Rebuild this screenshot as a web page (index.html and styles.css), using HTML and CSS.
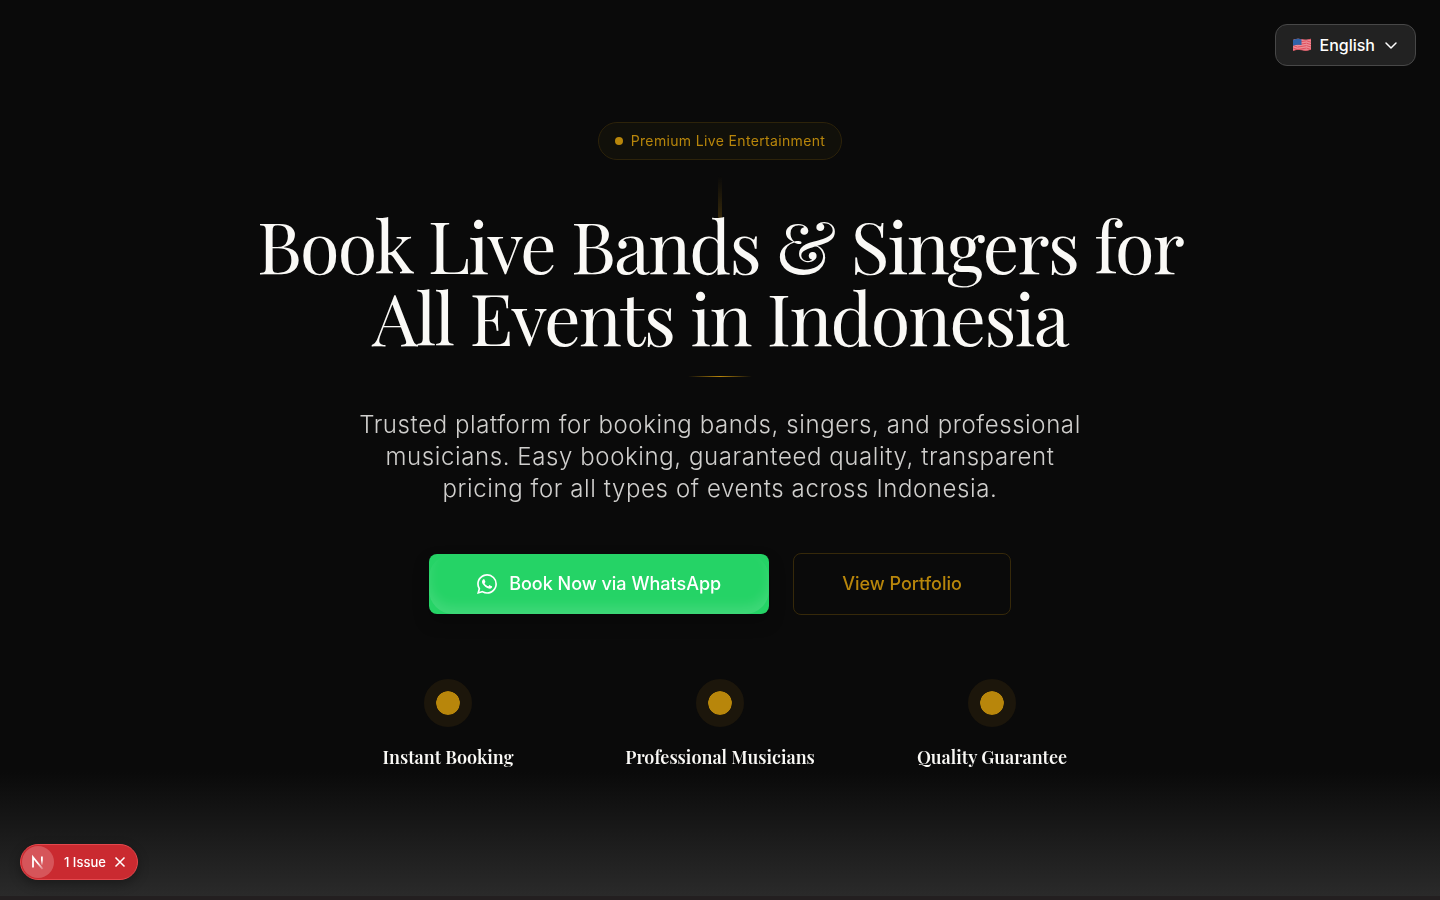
FILE: index.html
```html
<!DOCTYPE html>
<html lang="en">
<head>
<meta charset="utf-8">
<title>Book Live Bands &amp; Singers</title>
<link rel="stylesheet" href="styles.css">
</head>
<body>
<header class="topbar">
  <button class="lang" type="button">
    <svg class="flag" viewBox="0 0 18 14" aria-hidden="true">
      <path fill="#f3a6ae" d="M0 2 Q4.500 0 9 1.300 T18 .8 V11.500 Q13.500 13.500 9 12 T0 12.800Z"/>
      <g fill="none" stroke="#e0505e" stroke-width="1">
        <path d="M0 2.400Q4.500.5 9 1.800T18 1.300M0 4.100Q4.500 2.200 9 3.500T18 3M0 5.800Q4.500 3.900 9 5.200T18 4.700M0 7.500Q4.500 5.600 9 6.900T18 6.400M0 9.200Q4.500 7.300 9 8.600T18 8.100M0 10.900Q4.500 9 9 10.300T18 9.800M0 12.400Q4.500 10.500 9 11.800T18 11.300"/>
      </g>
      <path fill="#2f62a8" d="M0 2Q4.500 0 8.500 1.200V7Q4.500 6 0 7.700Z"/>
    </svg>
    <span>English</span>
    <svg class="chevron" viewBox="0 0 16 16" aria-hidden="true"><path d="m3 6 5 5 5-5"/></svg>
  </button>
</header>
<main class="hero">
  <p class="badge"><span class="badge-dot"></span>Premium Live Entertainment</p>
  <div class="beam"></div>
  <h1 class="title">Book Live Bands &amp; Singers for All Events in Indonesia</h1>
  <div class="rule"></div>
  <p class="lead">Trusted platform for booking bands, singers, and professional musicians. Easy booking, guaranteed quality, transparent pricing for all types of events across Indonesia.</p>
  <div class="actions">
    <a class="btn btn-primary" href="#book">
      <svg class="wa" viewBox="0 0 24 24" aria-hidden="true"><path d="M17.472 14.382c-.297-.149-1.758-.867-2.030-.967-.273-.099-.471-.148-.670.150-.197.297-.767.966-.940 1.164-.173.199-.347.223-.644.075-.297-.150-1.255-.463-2.390-1.475-.883-.788-1.480-1.761-1.653-2.059-.173-.297-.018-.458.130-.606.134-.133.298-.347.446-.520.149-.174.198-.298.298-.497.099-.198.050-.371-.025-.520-.075-.149-.669-1.612-.916-2.207-.242-.579-.487-.500-.669-.510-.173-.008-.371-.010-.570-.010-.198 0-.520.074-.792.372-.272.297-1.040 1.016-1.040 2.479 0 1.462 1.065 2.875 1.213 3.074.149.198 2.096 3.200 5.077 4.487.709.306 1.262.489 1.694.625.712.227 1.360.195 1.871.118.571-.085 1.758-.719 2.006-1.413.248-.694.248-1.289.173-1.413-.074-.124-.272-.198-.570-.347m-5.421 7.403h-.004a9.870 9.870 0 01-5.031-1.378l-.361-.214-3.741.982.998-3.648-.235-.374a9.860 9.860 0 01-1.510-5.260c.001-5.450 4.436-9.884 9.888-9.884 2.640 0 5.122 1.030 6.988 2.898a9.825 9.825 0 012.893 6.994c-.003 5.450-4.437 9.884-9.885 9.884m8.413-18.297A11.815 11.815 0 0012.050 0C5.495 0 .160 5.335.157 11.892c0 2.096.547 4.142 1.588 5.945L.057 24l6.305-1.654a11.882 11.882 0 005.683 1.448h.005c6.554 0 11.890-5.335 11.893-11.893a11.821 11.821 0 00-3.480-8.413z"/></svg>
      Book Now via WhatsApp
    </a>
    <a class="btn btn-outline" href="#portfolio">View Portfolio</a>
  </div>
  <ul class="features">
    <li class="feature"><span class="orb"></span><h3>Instant Booking</h3></li>
    <li class="feature"><span class="orb"></span><h3>Professional Musicians</h3></li>
    <li class="feature"><span class="orb"></span><h3>Quality Guarantee</h3></li>
  </ul>
</main>
<div class="fade"></div>
<div class="issues">
  <button class="issue-logo" type="button" aria-label="Open developer tools">
    <svg viewBox="0 0 20 20" aria-hidden="true">
      <defs>
        <linearGradient id="stem" x1="0" y1="0" x2="0" y2="1"><stop offset=".4" stop-color="#fff"/><stop offset="1" stop-color="#fff" stop-opacity="0"/></linearGradient>
        <linearGradient id="slash" gradientUnits="userSpaceOnUse" x1="10" y1="11" x2="15" y2="17"><stop offset="0" stop-color="#fff"/><stop offset="1" stop-color="#fff" stop-opacity=".2"/></linearGradient>
      </defs>
      <path d="M5 15.500V5.200L14.600 17" fill="none" stroke="url(#slash)" stroke-width="1.800"/>
      <rect x="13" y="4.500" width="1.800" height="9" fill="url(#stem)"/>
    </svg>
  </button>
  <button class="issue-text" type="button">1 Issue</button>
  <button class="issue-close" type="button" aria-label="Dismiss">
    <svg viewBox="0 0 12 12" aria-hidden="true"><path d="m1.500 1.500 9 9m0-9-9 9"/></svg>
  </button>
</div>
</body>
</html>
```
FILE: styles.css
```css
* { box-sizing: border-box; }
body {
  margin: 0;
  min-height: 100vh;
  display: flex;
  flex-direction: column;
  background: #0a0a0a;
  color: #faf9f6;
  font-family: Inter, "Liberation Sans", sans-serif;
}
.topbar {
  display: flex;
  justify-content: flex-end;
  padding: 24px 24px 0;
}
.lang {
  display: flex;
  align-items: center;
  gap: 8px;
  height: 42px;
  padding: 0 16px;
  border: 1px solid #484848;
  border-radius: 12px;
  background: #222;
  color: #fff;
  font: 500 16px/24px Inter, sans-serif;
}
.flag { width: 20px; height: 14px; }
.chevron {
  width: 16px;
  height: 16px;
  fill: none;
  stroke: currentColor;
  stroke-width: 1.5;
  stroke-linecap: round;
  stroke-linejoin: round;
}
.hero {
  display: flex;
  flex-direction: column;
  align-items: center;
  padding: 56px 24px 0;
  text-align: center;
}
.badge {
  display: flex;
  align-items: center;
  gap: 8px;
  height: 38px;
  margin: 0;
  padding: 0 16px;
  border: 1px solid #2d230a;
  border-radius: 20px;
  background: #11100a;
  color: #b8860b;
  font-size: 14px;
  font-weight: 400;
  line-height: 20px;
  letter-spacing: 0.025em;
}
.badge-dot {
  width: 8px;
  height: 8px;
  border-radius: 50%;
  background: #b8860b;
}
.beam {
  width: 4px;
  height: 48px;
  margin-top: 16px;
  margin-bottom: -16px;
  background: linear-gradient(to bottom, transparent, #3d2e0b);
}
.title {
  position: relative;
  max-width: 960px;
  margin: 0;
  font-family: "Playfair Display", "Liberation Serif", serif;
  font-size: 72px;
  font-weight: 400;
  line-height: 72px;
  letter-spacing: -0.025em;
}
.rule {
  width: 64px;
  height: 1px;
  margin-top: 24px;
  background: linear-gradient(to right, transparent, #b8860b, transparent);
}
.lead {
  max-width: 736px;
  margin: 32px 0 0;
  color: #d0cfcd;
  font-size: 24px;
  font-weight: 300;
  line-height: 32px;
  letter-spacing: 0.025em;
}
.actions {
  display: flex;
  align-items: center;
  gap: 24px;
  margin-top: 48px;
}
.btn {
  display: flex;
  align-items: center;
  gap: 12px;
  padding: 16px 48px;
  border-radius: 8px;
  font-size: 18px;
  line-height: 28px;
  text-decoration: none;
}
.btn-primary {
  height: 60px;
  background: #25d366;
  color: #fff;
  font-weight: 500;
  position: relative;
  box-shadow: 0 8px 16px #00000040;
}
.btn-primary::after {
  content: "";
  position: absolute;
  inset: 0;
  border-radius: 24px;
  box-shadow: inset 0 -8px 12px #ffffff1f;
}
.btn-outline {
  height: 62px;
  border: 1px solid #36290a;
  color: #b8860b;
  font-weight: 500;
}
.wa { width: 20px; height: 20px; fill: currentColor; }
.features {
  display: grid;
  grid-template-columns: repeat(3, 1fr);
  gap: 32px;
  width: 100%;
  max-width: 784px;
  margin: 64px 0 0;
  padding: 0;
  list-style: none;
}
.feature {
  display: flex;
  flex-direction: column;
  align-items: center;
  gap: 16px;
}
.orb {
  width: 48px;
  height: 48px;
  border: 12px solid #1c160b;
  border-radius: 50%;
  background: #b8860b;
  background-clip: padding-box;
}
.feature h3 {
  margin: 0;
  font-family: "Playfair Display", "Liberation Serif", serif;
  font-size: 18px;
  font-weight: 600;
  line-height: 28px;
}
.fade {
  position: fixed;
  right: 0;
  bottom: 0;
  left: 0;
  z-index: -1;
  height: 128px;
  border-bottom: 4px solid #231f20;
  background: linear-gradient(to top, #2a2a2a, #0a0a0a);
}
.issues {
  position: fixed;
  bottom: 20px;
  left: 20px;
  display: flex;
  align-items: center;
  height: 36px;
  padding: 1px;
  border: 1px solid #e5484d;
  border-radius: 18px;
  background: #ca2a30;
  box-shadow: 0 4px 12px #00000050;
}
.issues button {
  padding: 0;
  border: 0;
  background: none;
  color: #fff;
  font: 500 13px/20px Inter, sans-serif;
}
.issues .issue-logo {
  display: flex;
  align-items: center;
  justify-content: center;
  width: 32px;
  height: 32px;
  border-radius: 50%;
  background: #d6555a;
}
.issue-logo svg { width: 20px; height: 20px; }
.issues .issue-text { margin: 0 8px 0 10px; }
.issues .issue-close {
  display: flex;
  margin-right: 10px;
}
.issue-close svg { width: 12px; height: 12px; fill: none; stroke: currentColor; stroke-width: 1.5; }
```
